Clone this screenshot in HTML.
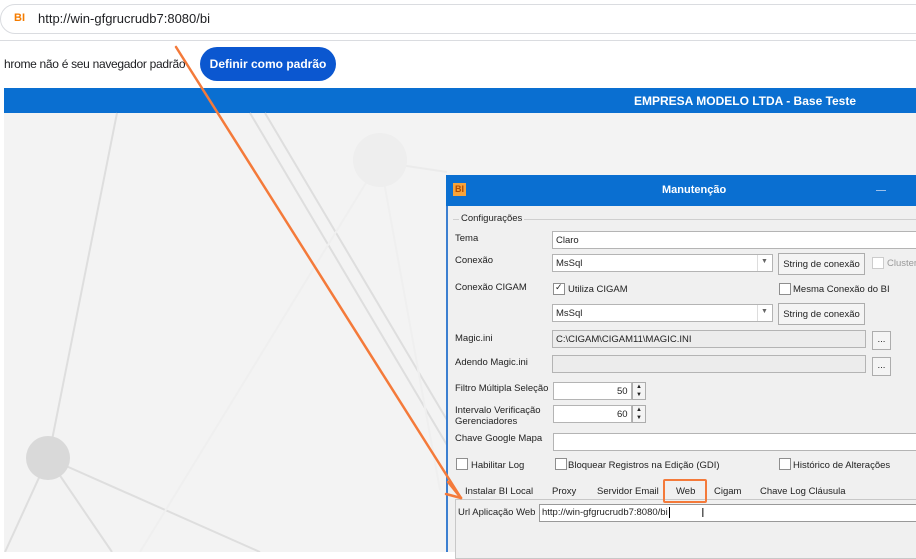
<!DOCTYPE html>
<html><head><meta charset="utf-8"><style>
*{margin:0;padding:0;box-sizing:border-box}
body{width:916px;height:552px;overflow:hidden;background:#fff;font-family:"Liberation Sans",sans-serif;position:relative}
.a{position:absolute}
.t{position:absolute;font-size:9.5px;color:#222;white-space:nowrap}
.in{position:absolute;background:#fff;border:1px solid #b4b4b4}
.gr{background:#ececec}
.btn{position:absolute;background:#f4f4f4;border:1px solid #adadad;font-size:9.5px;color:#222;text-align:center}
.cb{position:absolute;width:12px;height:12px;border:1px solid #8e8e8e;background:#fff}
</style></head><body>
<div class="a" style="left:0;top:4px;width:930px;height:30px;border:1px solid #dadce0;border-radius:15px;background:#fff"></div>
<div class="a" style="left:14px;top:12px;font-size:11px;font-weight:bold;color:#f57c00">BI</div>
<div class="a" style="left:38px;top:11px;font-size:13px;color:#202124">http://win-gfgrucrudb7:8080/bi</div>
<div class="a" style="left:0;top:40px;width:916px;height:1px;background:#dadce0"></div>
<div class="a" style="left:4px;top:57px;font-size:12px;color:#202124;letter-spacing:-0.3px">hrome não é seu navegador padrão</div>
<div class="a" style="left:200px;top:47px;width:136px;height:34px;border-radius:17px;background:#0b57d0;color:#fff;font-size:12px;font-weight:bold;text-align:center;line-height:34px">Definir como padrão</div>
<div class="a" style="left:4px;top:88px;width:912px;height:25px;background:#0a6fd1"></div>
<div class="a" style="left:634px;top:94px;color:#fff;font-size:12px;font-weight:bold">EMPRESA MODELO LTDA - Base Teste</div>
<div class="a" style="left:4px;top:113px;width:912px;height:439px;background:#f3f3f3"></div>
<svg class="a" style="left:0;top:0" width="916" height="552">
<g stroke="#dedede" stroke-width="2" fill="none">
<line x1="117" y1="113" x2="52" y2="440"/>
<line x1="48" y1="458" x2="5" y2="552"/>
<line x1="48" y1="458" x2="112" y2="552"/>
<line x1="48" y1="458" x2="260" y2="552"/>
<line x1="250" y1="113" x2="447" y2="445"/>
<line x1="265" y1="113" x2="447" y2="420"/>
<line x1="380" y1="160" x2="440" y2="490" stroke="#efefef"/>
<line x1="380" y1="160" x2="140" y2="552" stroke="#efefef"/>
<line x1="400" y1="165" x2="447" y2="172" stroke="#ebebeb"/>
</g>
<circle cx="48" cy="458" r="22" fill="#d9d9d9"/>
<circle cx="380" cy="160" r="27" fill="#eeeeee"/>
</svg>
<div class="a" style="left:446px;top:175px;width:470px;height:377px;background:#f0f0f0;border-left:2px solid #3c7fd0"></div>
<div class="a" style="left:446px;top:175px;width:470px;height:31px;background:#0a6fd1"></div>
<div class="a" style="left:453px;top:183px;width:13px;height:13px;background:#f7a33a;color:#b04a00;font-size:9px;font-weight:bold;text-align:center;line-height:13px">BI</div>
<div class="a" style="left:662px;top:184px;color:#fff;font-size:11px;font-weight:bold">Manutenção</div>
<div class="a" style="left:876px;top:190px;width:10px;height:1px;background:#9cc0ea"></div>
<div class="a" style="left:453px;top:219px;width:463px;height:1px;background:#cfcfcf"></div>
<div class="t" style="left:459px;top:213px;background:#f0f0f0;padding:0 2px">Configurações</div>
<div class="t" style="left:455px;top:233px">Tema</div>
<div class="in" style="left:552px;top:231px;width:370px;height:18px"></div><div class="t" style="left:556px;top:235px">Claro</div>
<div class="t" style="left:455px;top:255px">Conexão</div>
<div class="in" style="left:552px;top:254px;width:221px;height:18px"></div><div class="t" style="left:556px;top:258px">MsSql</div>
<div class="a" style="left:757px;top:255px;width:1px;height:16px;background:#ddd"></div><div class="t" style="left:761px;top:258px;font-size:7px;color:#666">▼</div>
<div class="btn" style="left:778px;top:253px;width:87px;height:22px;line-height:22px">String de conexão</div>
<div class="cb" style="left:872px;top:257px;border-color:#ccc"></div><div class="t" style="left:887px;top:258px;color:#999">Cluster</div>
<div class="t" style="left:455px;top:282px">Conexão CIGAM</div>
<div class="cb" style="left:553px;top:283px"></div><div class="t" style="left:555px;top:282px;font-size:9px">✓</div><div class="t" style="left:568px;top:284px">Utiliza CIGAM</div>
<div class="cb" style="left:779px;top:283px"></div><div class="t" style="left:793px;top:284px">Mesma Conexão do BI</div>
<div class="in" style="left:552px;top:304px;width:221px;height:18px"></div><div class="t" style="left:556px;top:308px">MsSql</div>
<div class="a" style="left:757px;top:305px;width:1px;height:16px;background:#ddd"></div><div class="t" style="left:761px;top:308px;font-size:7px;color:#666">▼</div>
<div class="btn" style="left:778px;top:303px;width:87px;height:22px;line-height:22px">String de conexão</div>
<div class="t" style="left:455px;top:333px">Magic.ini</div>
<div class="in gr" style="left:552px;top:330px;width:314px;height:18px"></div><div class="t" style="left:556px;top:334px">C:\CIGAM\CIGAM11\MAGIC.INI</div>
<div class="btn" style="left:872px;top:331px;width:19px;height:19px;line-height:16px">...</div>
<div class="t" style="left:455px;top:357px">Adendo Magic.ini</div>
<div class="in gr" style="left:552px;top:355px;width:314px;height:18px"></div>
<div class="btn" style="left:872px;top:357px;width:19px;height:19px;line-height:16px">...</div>
<div class="t" style="left:455px;top:383px">Filtro Múltipla Seleção</div>
<div class="in" style="left:553px;top:382px;width:79px;height:18px"></div><div class="t" style="left:617px;top:386px">50</div>
<div class="btn" style="left:632px;top:382px;width:14px;height:18px;font-size:6px;line-height:8px">▲<br>▼</div>
<div class="t" style="left:455px;top:405px;line-height:11px">Intervalo Verificação<br>Gerenciadores</div>
<div class="in" style="left:553px;top:405px;width:79px;height:18px"></div><div class="t" style="left:617px;top:409px">60</div>
<div class="btn" style="left:632px;top:405px;width:14px;height:18px;font-size:6px;line-height:8px">▲<br>▼</div>
<div class="t" style="left:455px;top:433px">Chave Google Mapa</div>
<div class="in" style="left:553px;top:433px;width:370px;height:18px"></div>
<div class="cb" style="left:456px;top:458px"></div><div class="t" style="left:471px;top:460px">Habilitar Log</div>
<div class="cb" style="left:555px;top:458px"></div><div class="t" style="left:568px;top:460px">Bloquear Registros na Edição (GDI)</div>
<div class="cb" style="left:779px;top:458px"></div><div class="t" style="left:793px;top:460px">Histórico de Alterações</div>
<div class="t" style="left:465px;top:486px">Instalar BI Local</div>
<div class="t" style="left:552px;top:486px">Proxy</div>
<div class="t" style="left:597px;top:486px">Servidor Email</div>
<div class="t" style="left:676px;top:486px">Web</div>
<div class="t" style="left:714px;top:486px">Cigam</div>
<div class="t" style="left:760px;top:486px">Chave Log Cláusula</div>
<div class="a" style="left:455px;top:499px;width:470px;height:60px;border:1px solid #c8c8c8;background:#f0f0f0"></div>
<div class="a" style="left:663px;top:479px;width:44px;height:24px;border:2px solid #f47a3a;border-radius:2px"></div>
<div class="t" style="left:458px;top:507px">Url Aplicação Web</div>
<div class="in" style="left:539px;top:504px;width:380px;height:18px;border-color:#999"></div>
<div class="t" style="left:542px;top:507px">http://win-gfgrucrudb7:8080/bi<span style="border-left:1px solid #000;margin-left:1px"></span></div>
<div class="t" style="left:701px;top:505px;font-size:13px;color:#333">I</div>
<svg class="a" style="left:0;top:0" width="916" height="552">
<g stroke="#f47a3a" stroke-width="2.5" fill="none" stroke-linecap="round">
<line x1="176" y1="47" x2="461" y2="498"/>
<line x1="461" y1="498" x2="448" y2="482"/>
<line x1="461" y1="498" x2="446" y2="494"/>
</g></svg>
</body></html>
